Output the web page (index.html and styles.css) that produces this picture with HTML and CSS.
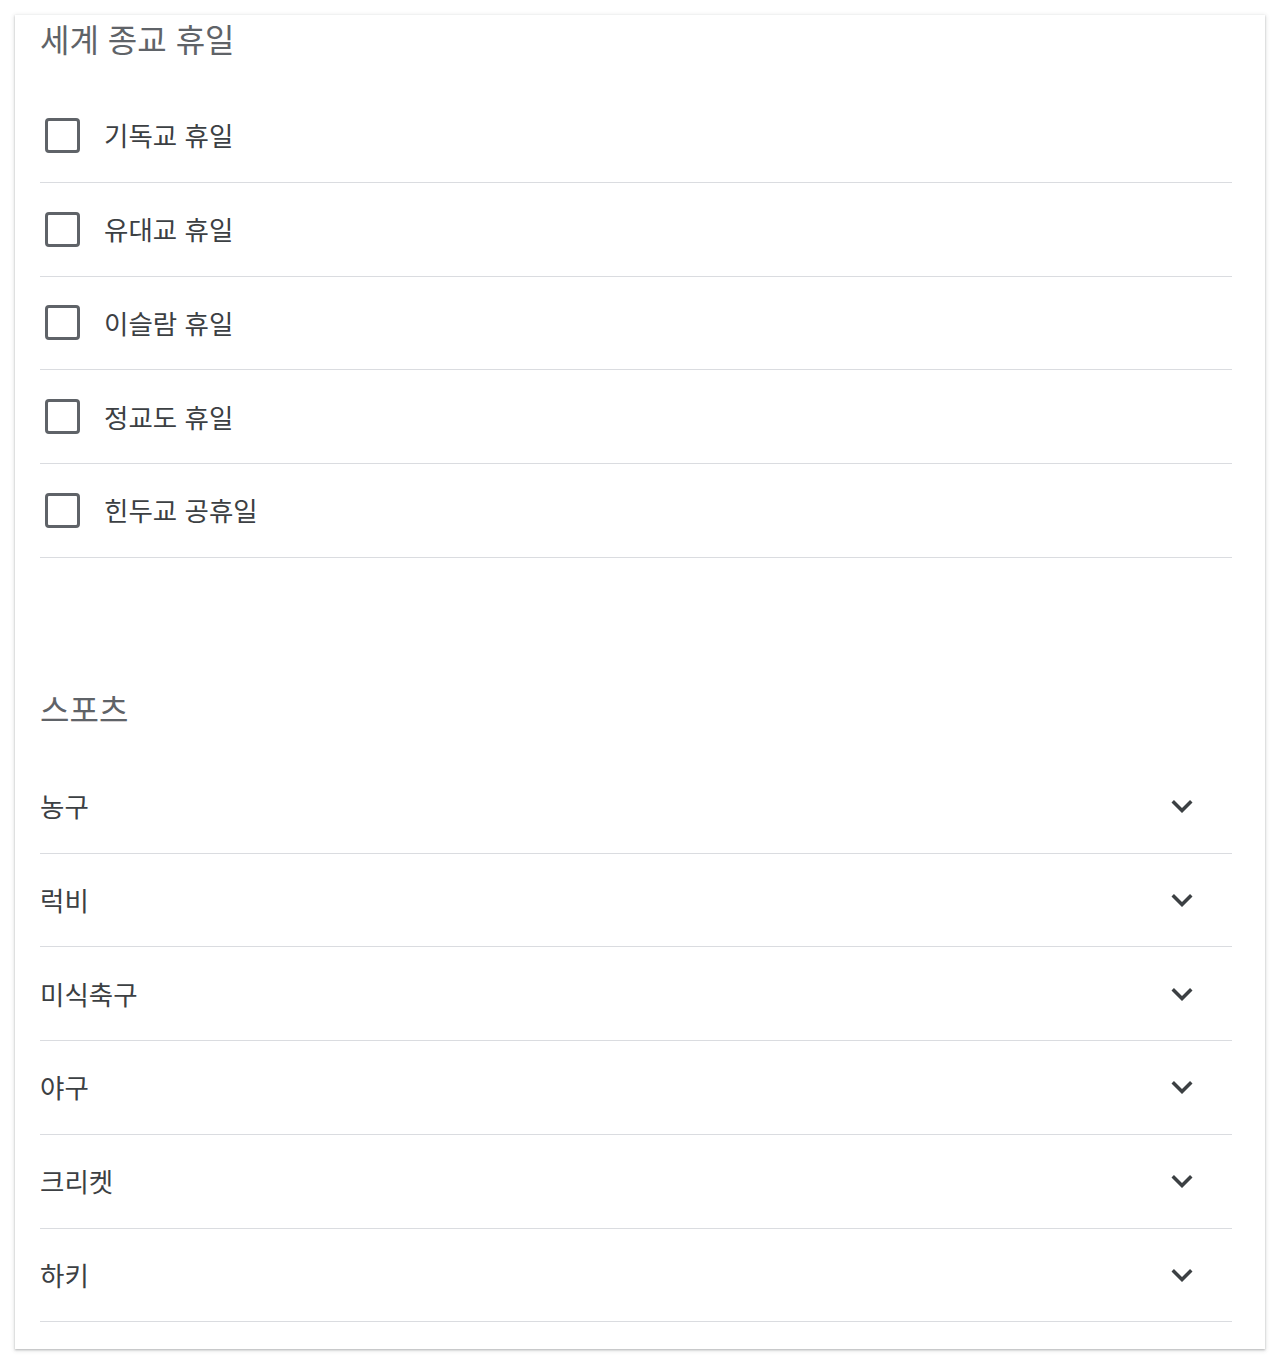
FILE: index.html
```html
<!DOCTYPE html>
<html lang="ko">
<head>
<meta charset="utf-8">
<link rel="stylesheet" href="styles.css">
</head>
<body>
<div class="card">
  <section class="section">
    <h2 class="section-title">세계 종교 휴일</h2>
    <ul class="list">
      <li class="row"><span class="checkbox"></span><span class="label">기독교 휴일</span></li>
      <li class="row"><span class="checkbox"></span><span class="label">유대교 휴일</span></li>
      <li class="row"><span class="checkbox"></span><span class="label">이슬람 휴일</span></li>
      <li class="row"><span class="checkbox"></span><span class="label">정교도 휴일</span></li>
      <li class="row"><span class="checkbox"></span><span class="label">힌두교 공휴일</span></li>
    </ul>
  </section>
  <section class="section sports">
    <h2 class="section-title">스포츠</h2>
    <ul class="list">
      <li class="row expand"><span class="label">농구</span><svg class="chev" viewBox="0 0 24 24"><path d="M16.59 8.59L12 13.17 7.41 8.59 6 10l6 6 6-6z"/></svg></li>
      <li class="row expand"><span class="label">럭비</span><svg class="chev" viewBox="0 0 24 24"><path d="M16.59 8.59L12 13.17 7.41 8.59 6 10l6 6 6-6z"/></svg></li>
      <li class="row expand"><span class="label">미식축구</span><svg class="chev" viewBox="0 0 24 24"><path d="M16.59 8.59L12 13.17 7.41 8.59 6 10l6 6 6-6z"/></svg></li>
      <li class="row expand"><span class="label">야구</span><svg class="chev" viewBox="0 0 24 24"><path d="M16.59 8.59L12 13.17 7.41 8.59 6 10l6 6 6-6z"/></svg></li>
      <li class="row expand"><span class="label">크리켓</span><svg class="chev" viewBox="0 0 24 24"><path d="M16.59 8.59L12 13.17 7.41 8.59 6 10l6 6 6-6z"/></svg></li>
      <li class="row expand"><span class="label">하키</span><svg class="chev" viewBox="0 0 24 24"><path d="M16.59 8.59L12 13.17 7.41 8.59 6 10l6 6 6-6z"/></svg></li>
    </ul>
  </section>
</div>
</body>
</html>
```
FILE: styles.css
```css
html, body {
  margin: 0;
  padding: 0;
  background: #ffffff;
}
body {
  font-family: "Noto Sans CJK KR", "Noto Sans", Roboto, sans-serif;
  color: #202124;
  padding: 15px;
}
.card {
  background: #ffffff;
  box-shadow: 0 1px 2px rgba(60, 64, 67, 0.3), 0 1px 4px 1px rgba(60, 64, 67, 0.12);
  padding: 3px 33px 27px 25px;
  width: 1250px;
  box-sizing: border-box;
}
.section-title {
  margin: 0;
  font-size: 32px;
  font-weight: 400;
  line-height: 40px;
  color: #5f6368;
  height: 40px;
}
.section .section-title {
  margin-bottom: 31px;
}
.sports {
  margin-top: 130px;
}
.sports .section-title {
  margin-bottom: 32px;
}
.list {
  list-style: none;
  margin: 0;
  padding: 0;
}
.row {
  display: flex;
  align-items: center;
  height: 93.75px;
  box-sizing: border-box;
  border-bottom: 1px solid #dadce0;
}
.checkbox {
  width: 35px;
  height: 35px;
  box-sizing: border-box;
  border: 3.5px solid #5f6368;
  border-radius: 4px;
  margin-left: 5px;
  margin-right: 24px;
  flex: none;
}
.label {
  font-size: 26.5px;
  line-height: 36px;
  color: #3c4043;
}
.expand .label {
  flex: 1;
}
.chev {
  width: 42px;
  height: 42px;
  fill: #3c4043;
  margin-right: 29px;
  flex: none;
}
```
